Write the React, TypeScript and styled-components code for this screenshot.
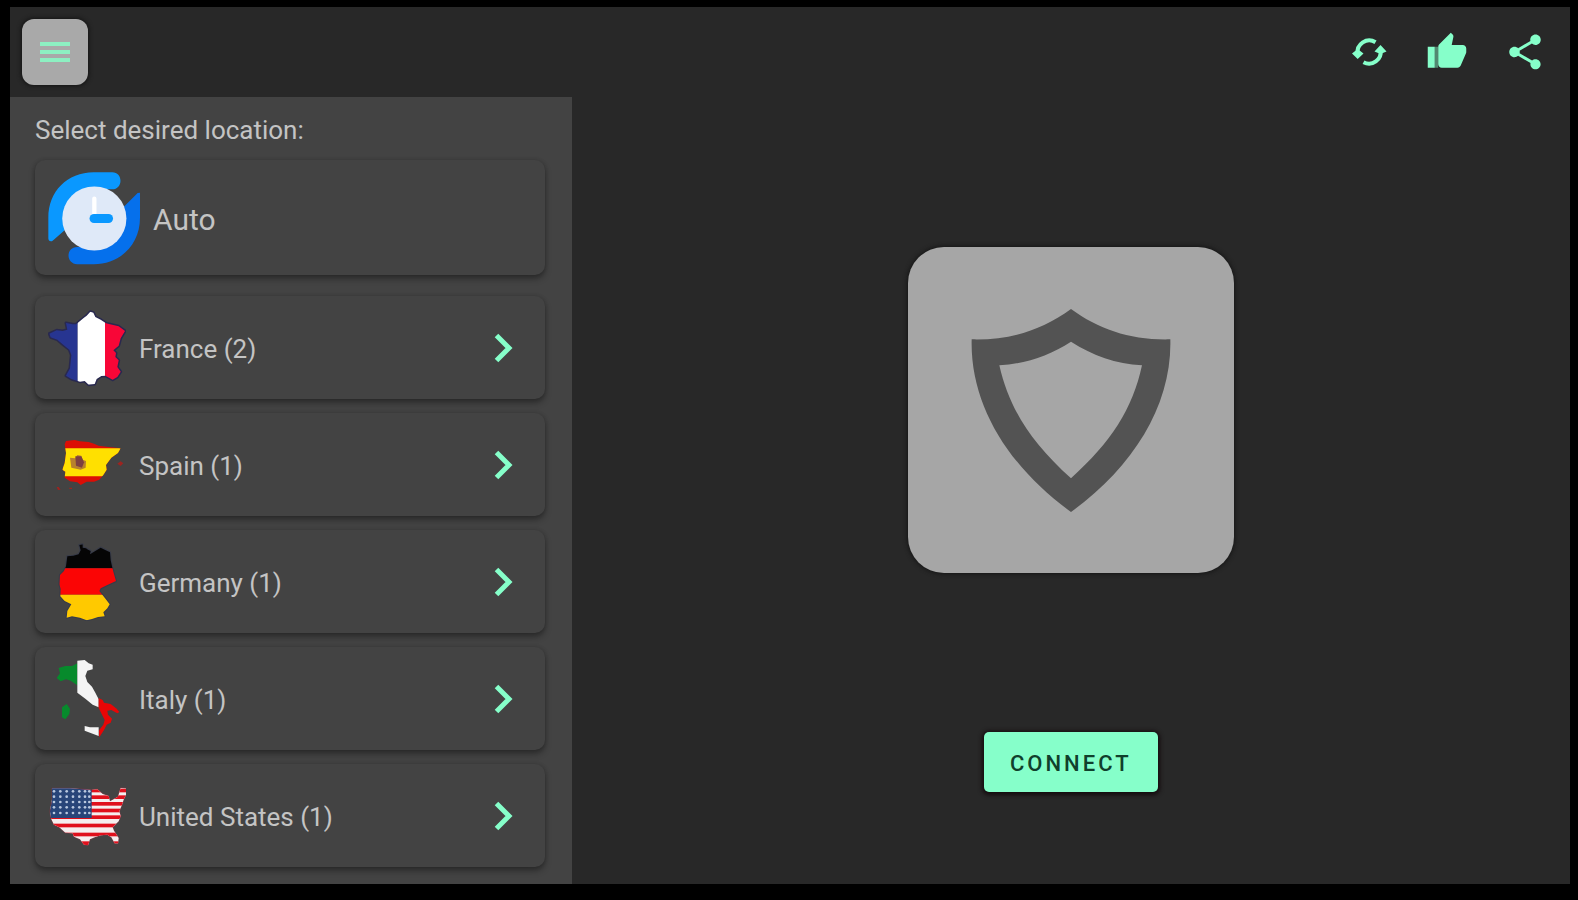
import React from "react";
import styled, { createGlobalStyle } from "styled-components";

const mint = "#86ffca";

const GlobalStyle = createGlobalStyle`
  * { box-sizing: border-box; }
  body {
    margin: 0;
    background: #000;
    font-family: Roboto, "Liberation Sans", sans-serif;
  }
  button { font: inherit; border: 0; cursor: pointer; }
  svg { display: block; }
`;

const Screen = styled.div`
  min-height: 100vh;
  padding: 7px 8px 16px 10px;
  display: flex;
  flex-direction: column;
`;

const Window = styled.div`
  flex: 1;
  display: flex;
  flex-direction: column;
  background: #282828;
`;

const TopBar = styled.header`
  display: flex;
  align-items: center;
  justify-content: space-between;
  height: 90px;
  padding: 0 24px 0 12px;
`;

const MenuButton = styled.button`
  display: grid;
  place-items: center;
  width: 66px;
  height: 66px;
  padding: 0;
  border-radius: 12px;
  background: #a9a9a9;
  box-shadow: 0 0 4px 1px #141414;
`;

const Actions = styled.div`
  display: flex;
  gap: 36px;
`;

const IconButton = styled.button`
  width: 42px;
  height: 42px;
  padding: 0;
  background: none;
  color: ${mint};
`;

const Body = styled.div`
  flex: 1;
  display: flex;
`;

const Sidebar = styled.nav`
  width: 36%;
  min-width: 420px;
  padding: 17px 27px 17px 25px;
  background: #434343;
`;

const SidebarTitle = styled.h1`
  margin: 0 0 14px;
  font-size: 26px;
  line-height: 32px;
  font-weight: 400;
  color: #c4c4c4;
`;

const LocationList = styled.ul`
  display: flex;
  flex-direction: column;
  gap: 14px;
  margin: 0;
  padding: 0;
  list-style: none;
`;

const LocationCard = styled.button<{ $large?: boolean }>`
  display: flex;
  align-items: center;
  gap: 13px;
  width: 100%;
  height: ${(p) => (p.$large ? 115 : 103)}px;
  margin-bottom: ${(p) => (p.$large ? 7 : 0)}px;
  padding: 0 31px 0 13px;
  border-radius: 10px;
  background: #434343;
  box-shadow: 0 4px 6px rgba(0, 0, 0, 0.34), 0 0 4px rgba(0, 0, 0, 0.16);
  color: #c4c4c4;
  font-size: ${(p) => (p.$large ? 30 : 26)}px;
  text-align: left;
`;

const LocationName = styled.span`
  flex: 1;
  padding-top: 3px;
`;

const Main = styled.main`
  flex: 1;
  display: flex;
  flex-direction: column;
  align-items: center;
  gap: 159px;
  padding: 150px 24px 92px;
`;

const StatusCard = styled.div`
  display: grid;
  place-items: center;
  width: 326px;
  height: 326px;
  border-radius: 36px;
  background: #a6a6a6;
  box-shadow: 0 0 4px 1px #161616;
`;

const ConnectButton = styled.button`
  width: 174px;
  height: 60px;
  padding: 2px 0 0;
  border-radius: 5px;
  background: ${mint};
  box-shadow: 0 1px 4px 2px #140c0e;
  color: #10402c;
  && {
    font-size: 22px;
    font-weight: 500;
    letter-spacing: 3px;
  }
`;

const MenuIcon = () => (
  <svg width="30" height="24" viewBox="0 0 30 24" stroke="#8df0c2" strokeWidth="4" aria-hidden="true">
    <path d="M0 4H30M0 12H30M0 20H30" />
  </svg>
);

const RefreshIcon = () => (
  <svg width="42" height="42" viewBox="0 0 42 42" aria-hidden="true">
    <g fill="none" stroke="currentColor" strokeWidth="4">
      <path d="M9.700 23A11.700 11.700 0 0 1 27.500 11.200" />
      <path d="M32.500 19A11.700 11.700 0 0 1 15.500 31.300" />
    </g>
    <path d="M4 22.500L9.700 18L15.500 22.500L9.700 28Z M26.500 20.500L32.500 14L38.500 20.500L32.500 23Z" fill="currentColor" />
  </svg>
);

const ThumbIcon = () => (
  <svg width="42" height="42" viewBox="0 0 24 24" fill="currentColor" aria-hidden="true">
    <path d="M1 21h4V9H1v12zm22-11c0-1.100-.9-2-2-2h-6.310l.95-4.570.03-.32c0-.41-.17-.79-.44-1.060L14.170 1 7.590 7.590C7.220 7.950 7 8.450 7 9v10c0 1.100.9 2 2 2h9c.83 0 1.540-.5 1.840-1.220l3.020-7.050c.09-.23.14-.47.14-.73v-2z" />
    <path d="M5 9h2v12H5z" opacity="0.45" />
  </svg>
);

const ShareIcon = () => (
  <svg width="42" height="42" viewBox="0 0 24 24" fill="currentColor" aria-hidden="true">
    <path d="M18 16.080c-.76 0-1.440.3-1.960.77L8.910 12.700c.05-.23.09-.46.09-.7s-.04-.47-.09-.7l7.050-4.110c.54.5 1.250.81 2.040.81 1.660 0 3-1.340 3-3s-1.340-3-3-3-3 1.340-3 3c0 .24.04.47.09.7L8.040 9.810C7.500 9.310 6.790 9 6 9c-1.660 0-3 1.340-3 3s1.340 3 3 3c.79 0 1.500-.31 2.040-.81l7.120 4.160c-.05.21-.08.43-.08.65 0 1.610 1.310 2.920 2.920 2.920s2.920-1.310 2.920-2.920-1.310-2.920-2.920-2.920z" />
  </svg>
);

const ChevronIcon = () => (
  <svg width="20" height="30" viewBox="0 0 20 30" fill="none" stroke={mint} strokeWidth="5" aria-hidden="true">
    <path d="M2.500 2.500L15 15L2.500 27.500" />
  </svg>
);

const ShieldIcon = () => (
  <svg width="200" height="204" viewBox="0 -3 600 612" fill="none" aria-hidden="true">
    <path
      fill="#535353"
      fillRule="evenodd"
      d="M300 0C385 62 480 94 598 91C603 290 485 475 300 609C115 475 -3 290 2 91C120 94 215 62 300 0Z
         M300 98C235 140 165 164 85 169C115 300 180 400 300 508C420 400 485 300 513 169C435 164 365 140 300 98Z"
    />
  </svg>
);

const AutoIcon = () => (
  <svg width="92" height="94" viewBox="142 509 278 283" aria-hidden="true">
    <path
      fill="#0a98ff"
      d="M143 712V650C143 570 200 512 280 512H336C352 512 361 524 361 538C361 552 352 564 336 564H300L194 686L156 719C150 723 143 720 143 712Z"
    />
    <path
      fill="#0570ec"
      d="M420 574V650C420 730 362 790 280 790H230C214 790 204 778 204 764C204 750 214 738 230 738H262L372 616L413 575Z"
    />
    <circle cx="282" cy="652" r="97" fill="#dfe9f8" />
    <path d="M282 592V640" stroke="#fff" strokeWidth="13" strokeLinecap="round" />
    <path d="M281 652H325" stroke="#0a98ff" strokeWidth="27" strokeLinecap="round" />
  </svg>
);

const FlagSvg = ({ box, children }: { box: string; children: React.ReactNode }) => (
  <svg width="78" height="78" viewBox={box} aria-hidden="true">
    {children}
  </svg>
);

const franceShape =
  "M181 60L170 72L160 80L143 94L138 98L128 98L108 94L112 114L98 118L80 116L58 126L62 137L82 144L98 158L118 174L124 190L120 230L108 252L124 262L150 270L164 268L176 279L194 277L200 262L214 253L226 252L248 264L262 256L272 240L262 226L266 206L256 196L258 184L250 176L266 162L272 140L285 118L266 104L240 98L228 95L212 84L196 76L190 63Z";

const FranceFlag = () => (
  <FlagSvg box="54 52 234 234">
    <clipPath id="france"><path d={franceShape} /></clipPath>
    <path d={franceShape} fill="none" stroke="#29294f" strokeWidth="9" strokeLinejoin="round" />
    <g clipPath="url(#france)">
      <path fill="#273591" d="M50 50H143V290H50Z" />
      <path fill="#fff" d="M143 50H225V290H143Z" />
      <path fill="#f80637" d="M225 50H295V290H225Z" />
    </g>
  </FlagSvg>
);

const spainShape =
  "M104 98L108 88L134 85L150 89L176 91L192 96L206 102L236 106L272 110L264 124L244 138L228 160L230 174L220 190L208 204L192 210L170 210L152 220L142 212L120 209L104 198L106 180L97 174L104 154L108 124Z";

const SpainFlag = () => (
  <FlagSvg box="54 43 234 234">
    <clipPath id="spain"><path d={spainShape} /></clipPath>
    <g clipPath="url(#spain)">
      <path fill="#dc0d05" d="M50 50H290V240H50Z" />
      <path fill="#ffe000" d="M50 110H290V194H50Z" />
      <path fill="#b8812c" d="M120 138L136 140L142 130L154 132L158 144L168 148L167 168L152 174L124 168Z" />
      <path fill="#7d4040" d="M136 134H154L162 152L156 168L138 162Z" />
    </g>
    <path fill="#9c2420" d="M262 156L272 149L280 155L272 163Z M80 226L86 226L92 234L84 235Z M118 228H126V232H118Z" />
  </FlagSvg>
);

const germanyShape =
  "M148 58L158 56L158 66L168 68L174 72L182 76L180 86L196 76L212 66L224 72L240 80L242 104L247 126L250 138L258 166L232 178L212 188L208 196L224 216L239 236L232 248L220 260L224 272L204 274L186 280L170 284L150 276L126 272L110 276L112 256L124 236L104 226L91 212L92 190L88 176L90 148L102 136L108 122L112 92L130 90L146 86L152 74Z";

const GermanyFlag = () => (
  <FlagSvg box="54 52 234 234">
    <clipPath id="germany"><path d={germanyShape} /></clipPath>
    <path d={germanyShape} fill="none" stroke="#373b49" strokeWidth="6" strokeLinejoin="round" />
    <g clipPath="url(#germany)">
      <path fill="#050505" d="M50 50H290V128H50Z" />
      <path fill="#fb0505" d="M50 128H290V207H50Z" />
      <path fill="#ffc900" d="M50 207H290V290H50Z" />
    </g>
  </FlagSvg>
);

const ItalyFlag = () => (
  <FlagSvg box="54 58 234 234">
    <path fill="#078a2c" d="M142 68L126 76L106 76L86 82L90 98L80 112L92 122L108 116L122 120L142 134Z" />
    <path fill="#078a2c" d="M96 200L110 190L120 204L118 220L106 236L96 230Z" />
    <path fill="#f4f4f4" d="M142 60L164 58L176 68L188 72L188 86L172 90L166 106L172 124L186 138L196 156L206 176L206 200L188 192L166 174L142 156Z" />
    <path fill="#e80606" d="M206 172L218 178L222 186L242 190L260 204L268 214L262 218L244 208L232 210L234 222L246 234L242 246L230 252L222 268L208 290L206 270L220 252L224 238L206 202Z" />
    <path fill="#f4f4f4" d="M164 256L180 260L206 260V286L190 280L164 270Z" />
  </FlagSvg>
);

const usaShape =
  "M66 97L120 97L184 102L202 100L218 114L236 120L240 136L264 122L272 96L292 98L290 112L282 128L276 146L268 166L272 180L266 196L248 214L252 224L266 246L264 262L254 262L244 244L232 236L212 238L194 244L180 250L174 268L162 266L150 250L132 242L128 232L106 230L88 214L72 206L64 190L60 166L66 130Z";

const stripeTops = [98, 118, 138, 158, 178, 203, 230, 256];
const starColumns = [72, 91, 110, 129, 148, 165, 178];
const starRows = [106, 122, 138, 154, 171];

const UsaFlag = () => (
  <FlagSvg box="54 63 234 234">
    <clipPath id="usa"><path d={usaShape} /></clipPath>
    <path d={usaShape} fill="none" stroke="#683b43" strokeWidth="4" strokeLinejoin="round" />
    <g clipPath="url(#usa)">
      <path fill="#f5eeee" d="M50 90H300V280H50Z" />
      {stripeTops.map((y) => (
        <rect key={y} x="50" y={y} width="250" height="11" fill="#e0101c" />
      ))}
      <path fill="#284579" d="M50 90H185V186H50Z" />
      {starRows.map((y) =>
        starColumns.map((x) => <circle key={`${x}-${y}`} cx={x} cy={y} r="4" fill="#b9c8df" />)
      )}
    </g>
  </FlagSvg>
);

const locations = [
  { name: "France", servers: 2, Flag: FranceFlag },
  { name: "Spain", servers: 1, Flag: SpainFlag },
  { name: "Germany", servers: 1, Flag: GermanyFlag },
  { name: "Italy", servers: 1, Flag: ItalyFlag },
  { name: "United States", servers: 1, Flag: UsaFlag },
];

export default function App() {
  return (
    <Screen>
      <GlobalStyle />
      <Window>
        <TopBar>
          <MenuButton type="button" aria-label="Menu">
            <MenuIcon />
          </MenuButton>
          <Actions>
            <IconButton type="button" aria-label="Refresh"><RefreshIcon /></IconButton>
            <IconButton type="button" aria-label="Rate"><ThumbIcon /></IconButton>
            <IconButton type="button" aria-label="Share"><ShareIcon /></IconButton>
          </Actions>
        </TopBar>
        <Body>
          <Sidebar aria-label="Locations">
            <SidebarTitle>Select desired location:</SidebarTitle>
            <LocationList>
              <li>
                <LocationCard type="button" $large>
                  <AutoIcon />
                  <LocationName>Auto</LocationName>
                </LocationCard>
              </li>
              {locations.map(({ name, servers, Flag }) => (
                <li key={name}>
                  <LocationCard type="button">
                    <Flag />
                    <LocationName>{`${name} (${servers})`}</LocationName>
                    <ChevronIcon />
                  </LocationCard>
                </li>
              ))}
            </LocationList>
          </Sidebar>
          <Main>
            <StatusCard>
              <ShieldIcon />
            </StatusCard>
            <ConnectButton type="button">CONNECT</ConnectButton>
          </Main>
        </Body>
      </Window>
    </Screen>
  );
}
